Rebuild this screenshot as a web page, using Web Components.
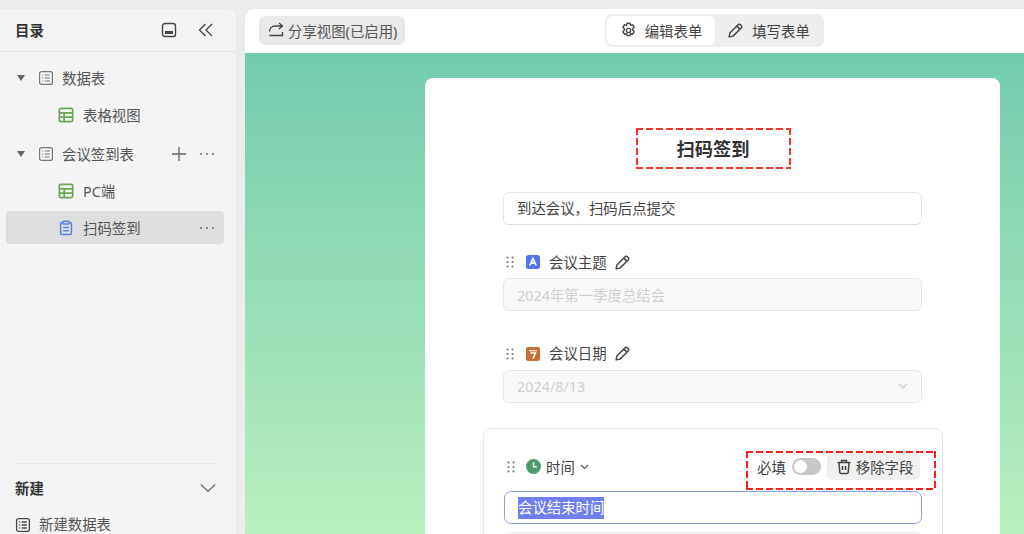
<!DOCTYPE html>
<html lang="zh">
<head>
<meta charset="utf-8">
<title>扫码签到</title>
<style>
html, body { margin: 0; height: 100%; overflow: hidden; background: #ececec; }
body { font-family: "Noto Sans", "Noto Sans CJK SC", sans-serif; font-size: 14.4px; color: #444; }
</style>
</head>
<body>
<app-shell>
    <side-bar slot="side">
        <tree-row icon="list" arrow>数据表</tree-row>
        <tree-row icon="grid" child>表格视图</tree-row>
        <tree-row icon="list" arrow plus more style="margin-top:2px">会议签到表</tree-row>
        <tree-row icon="grid" child>PC端</tree-row>
        <tree-row icon="clip" child more selected>扫码签到</tree-row>
    </side-bar>
    <top-bar slot="top"></top-bar>
    <form-card slot="main">
        <form-field icon="text" label="会议主题" value="2024年第一季度总结会"></form-field>
        <form-field icon="date" label="会议日期" value="2024/8/13" select></form-field>
        <active-field></active-field>
    </form-card>
</app-shell>

<script>
const ICONS = {
    list: `<svg width="16" height="16" viewBox="0 0 16 16" fill="none" stroke="#777" stroke-width="1.2"><rect x="1.6" y="1.6" width="12.8" height="12.8" rx="2"/><path d="M4.2 5h1M4.2 8h1M4.2 11h1M6.8 5h5M6.8 8h5M6.8 11h5"/></svg>`,
    listDark: `<svg width="16" height="16" viewBox="0 0 16 16" fill="none" stroke="#444" stroke-width="1.3"><rect x="1.6" y="1.6" width="12.8" height="12.8" rx="2"/><path d="M4.2 5h1M4.2 8h1M4.2 11h1M6.8 5h5M6.8 8h5M6.8 11h5"/></svg>`,
    grid: `<svg width="16" height="16" viewBox="0 0 16 16" fill="none" stroke="#6aa84f" stroke-width="1.7"><rect x="1.3" y="1.3" width="13.4" height="13.4" rx="1.6"/><path d="M1.3 5.8h13.400M1.3 10.200h13.400M6.200 5.800v8.900"/></svg>`,
    clip: `<svg width="16" height="16" viewBox="0 0 16 16" fill="none" stroke="#5b7ee5" stroke-width="1.5"><path d="M5 2.600H3.800a1.200 1.200 0 0 0-1.200 1.200v9.400a1.400 1.400 0 0 0 1.400 1.400h8a1.400 1.400 0 0 0 1.400-1.400V3.800a1.200 1.200 0 0 0-1.200-1.200H11"/><rect x="5" y="1.200" width="6" height="2.800" rx=".8"/><path d="M5.200 7.500h5.600M5.200 10.700h5.600"/></svg>`,
    pencil: `<svg width="17" height="17" viewBox="0 0 16 16" fill="none" stroke="#444" stroke-width="1.400" stroke-linejoin="round"><path d="M2 14l.7-3.600 7.700-7.800a1.600 1.600 0 0 1 2.300 0l.7.700a1.600 1.600 0 0 1 0 2.300l-7.800 7.700z"/><path d="M9.200 3.900l2.900 2.900"/></svg>`,
    grip: `<svg width="10" height="14" viewBox="0 0 10 14" fill="#777"><circle cx="2.500" cy="2.500" r="1.100"/><circle cx="7.500" cy="2.500" r="1.100"/><circle cx="2.500" cy="7" r="1.100"/><circle cx="7.500" cy="7" r="1.100"/><circle cx="2.500" cy="11.500" r="1.100"/><circle cx="7.500" cy="11.500" r="1.100"/></svg>`,
    dots: `<svg width="16" height="4" viewBox="0 0 16 4" fill="#777"><circle cx="2" cy="2" r="1.100"/><circle cx="8" cy="2" r="1.100"/><circle cx="14" cy="2" r="1.100"/></svg>`,
    plus: `<svg width="16" height="16" viewBox="0 0 16 16" fill="none" stroke="#666" stroke-width="1.300"><path d="M8 1v14M1 8h14"/></svg>`
};

// long red dashes, a plain dashed border comes out too short
function dashedBox(color) {
    const h = `repeating-linear-gradient(90deg, ${color} 0 7px, transparent 7px 10px)`;
    const v = `repeating-linear-gradient(180deg, ${color} 0 7px, transparent 7px 10px)`;
    return `border: 2px solid transparent; background: ${h} top / 100% 2px no-repeat border-box, ${h} bottom / 100% 2px no-repeat border-box, ${v} left / 2px 100% no-repeat border-box, ${v} right / 2px 100% no-repeat border-box;`;
}

class AppShell extends HTMLElement {
    constructor() {
        super();
        this.attachShadow({ mode: "open" });
        this.shadowRoot.innerHTML = `
            <style>
                :host { display: grid; grid-template-columns: 236px 1fr; column-gap: 9px; height: 534px; padding-top: 9px; box-sizing: border-box; overflow: hidden; }
                .main { display: flex; flex-direction: column; min-width: 0; height: 525px; border-radius: 10px 0 0 0; overflow: hidden; }
            </style>
            <slot name="side"></slot>
            <div class="main">
                <slot name="top"></slot>
                <slot name="main"></slot>
            </div>
        `;
    }
}

class SideBar extends HTMLElement {
    constructor() {
        super();
        this.attachShadow({ mode: "open" });
        this.shadowRoot.innerHTML = `
            <style>
                :host { display: flex; flex-direction: column; height: 525px; background: #f4f4f4; border-radius: 0 10px 0 0; overflow: hidden; }
                .head { display: flex; align-items: center; height: 42px; flex: none; padding: 0 22px 0 15px; border-bottom: 1px solid #e6e6e6; }
                h2 { margin: 0 0 2px; flex: 1; font-size: 14.4px; font-weight: 700; color: #333; }
                .head svg + svg { margin-left: 21px; }
                .tree { display: flex; flex-direction: column; padding: 7px 12px 0 6px; }
                .foot { margin-top: auto; flex: none; height: 71px; box-sizing: border-box; margin-left: 15px; margin-right: 20px; border-top: 1px solid #e8e8e8; }
                .new { display: flex; align-items: center; justify-content: space-between; height: 47px; font-weight: 700; color: #333; }
                .item { display: flex; align-items: center; gap: 8px; height: 18px; margin-top: 5px; line-height: 18px; color: #555; }
            </style>
            <div class="head">
                <h2>目录</h2>
                <svg width="16" height="16" viewBox="0 0 16 16" fill="none" stroke="#444" stroke-width="1.400"><rect x="1.500" y="1.500" width="13" height="13" rx="2.500"/><rect x="4" y="9" width="8" height="3" fill="#444" stroke="none"/></svg>
                <svg width="16" height="16" viewBox="0 0 16 16" fill="none" stroke="#444" stroke-width="1.300"><path d="M7.500 2L1.500 8l6 6M14 2L8 8l6 6"/></svg>
            </div>
            <div class="tree"><slot></slot></div>
            <div class="foot">
                <div class="new">新建
                    <svg width="16" height="10" viewBox="0 0 16 10" fill="none" stroke="#666" stroke-width="1.200"><path d="M1 1.500l7 7 7-7"/></svg>
                </div>
                <div class="item">${ICONS.listDark}<span>新建数据表</span></div>
            </div>
        `;
    }
}

class TreeRow extends HTMLElement {
    constructor() {
        super();
        this.attachShadow({ mode: "open" });
        const arrow = this.hasAttribute("arrow");
        this.shadowRoot.innerHTML = `
            <style>
                :host { display: flex; align-items: center; height: 37px; border-radius: 4px; color: #555; flex: none; padding-left: ${this.hasAttribute("child") ? "52px" : "11px"}; }
                :host([selected]) { background: #dedede; height: 33px; margin: 2px 0; }
                :host([child]) .label { margin-left: 9px; }
                .arrow { width: 0; height: 0; border: 4px solid transparent; border-top: 6px solid #666; border-bottom: 0; margin-right: 13px; }
                .label { margin-left: 8px; flex: 1; }
                .tools { display: flex; align-items: center; gap: 12px; padding-right: 9px; }
            </style>
            ${arrow ? `<span class="arrow"></span>` : ""}
            ${ICONS[this.getAttribute("icon")]}
            <span class="label"><slot></slot></span>
            <span class="tools">
                ${this.hasAttribute("plus") ? ICONS.plus : ""}
                ${this.hasAttribute("more") ? ICONS.dots : ""}
            </span>
        `;
    }
}

class TopBar extends HTMLElement {
    constructor() {
        super();
        this.attachShadow({ mode: "open" });
        this.shadowRoot.innerHTML = `
            <style>
                :host { display: grid; grid-template-columns: 1fr auto; align-items: center; height: 44px; flex: none; background: #fff; padding: 0 200px 2px 14px; box-sizing: border-box; }
                .share { justify-self: start; display: flex; align-items: center; gap: 4px; height: 29px; padding: 0 8px 0 9px; background: #e9e9e9; border-radius: 6px; color: #555; white-space: nowrap; }
                .seg { display: flex; padding: 2px; background: #eee; border-radius: 7px; }
                .tab { display: flex; align-items: center; gap: 8px; height: 29px; width: 107px; box-sizing: border-box; justify-content: center; border-radius: 6px; white-space: nowrap; }
                .tab.on { background: #fff; width: 108px; }
            </style>
            <div class="share">
                <svg width="16" height="16" viewBox="0 0 16 16" fill="none" stroke="#444" stroke-width="1.300"><path d="M1.500 9.500a5.500 5.500 0 0 1 5.500-5.500h7M11 1l3.500 3L11 7M1.500 13.500h13V10"/></svg>
                <span>分享视图(已启用)</span>
            </div>
            <div class="seg">
                <div class="tab on">
                    <svg width="17" height="17" viewBox="0 0 16 16" fill="none" stroke="#444" stroke-width="1.300" stroke-linejoin="round"><path d="M6.600 1.200h2.800l.5 1.900 1.900-.6 1.500 2.500-1.400 1.400v1.200l1.400 1.400-1.500 2.500-1.900-.6-.5 1.900H6.600l-.5-1.900-1.900.6-1.500-2.500 1.400-1.400V6.400L2.700 5l1.500-2.500 1.900.6z"/><circle cx="8" cy="8" r="2"/></svg>
                    <span>编辑表单</span>
                </div>
                <div class="tab">${ICONS.pencil}<span>填写表单</span></div>
            </div>
        `;
    }
}

class FormCard extends HTMLElement {
    constructor() {
        super();
        this.attachShadow({ mode: "open" });
        this.shadowRoot.innerHTML = `
            <style>
                :host { display: flex; justify-content: flex-end; flex: 1; min-height: 0; padding: 25px 24px 0 0; box-sizing: border-box; overflow: hidden; background: linear-gradient(#72cbae, #b9f0c0); }
                .card { width: 575px; height: 600px; flex: none; background: #fff; border-radius: 8px 8px 0 0; padding: 50px 57px 0 58px; box-sizing: border-box; }
                .title { display: block; width: 155px; height: 41px; margin: 0 auto; box-sizing: border-box; ${dashedBox("#f5352b")} color: #333; font-size: 18.3px; font-weight: 700; line-height: 37px; text-align: center; }
                .desc { height: 33px; margin: 23px 21px 0 20px; padding-left: 13px; box-sizing: border-box; border: 1px solid #e6e6e6; border-bottom-color: #ddd; border-radius: 6px; line-height: 31px; color: #444; }
            </style>
            <div class="card">
                <h1 class="title">扫码签到</h1>
                <div class="desc">到达会议，扫码后点提交</div>
                <slot></slot>
            </div>
        `;
    }
}

class FormField extends HTMLElement {
    constructor() {
        super();
        this.attachShadow({ mode: "open" });
        const isText = this.getAttribute("icon") === "text";
        const badge = isText
            ? `<svg width="14" height="14" viewBox="0 0 14 14"><rect width="14" height="14" rx="2.500" fill="#5570f1"/><path d="M3.800 10.500L7 3.500l3.200 7M5 8.200h4" fill="none" stroke="#fff" stroke-width="1.700"/></svg>`
            : `<svg width="14" height="14" viewBox="0 0 14 14"><rect width="14" height="14" rx="2" fill="#c96f36"/><path d="M3 3h8v1.300H3z" fill="#fff" opacity=".8"/><path d="M4.500 6h5L7 11.500" fill="none" stroke="#fff" stroke-width="1.500"/></svg>`;
        this.shadowRoot.innerHTML = `
            <style>
                :host { display: block; margin: 0 21px 0 20px; height: 91.5px; padding-top: 27px; box-sizing: border-box; }
                .head { display: flex; align-items: center; height: 20px; margin-left: 2px; margin-bottom: 6px; color: #444; }
                .head .g { margin-right: 11px; display: flex; }
                .head .b { margin-right: 9px; display: flex; }
                .head .t { padding-bottom: 2px; }
                .head .p { margin-left: 7px; display: flex; }
                .box { display: flex; align-items: center; justify-content: space-between; height: 33px; padding: 0 13px; box-sizing: border-box; background: #f9f9f9; border: 1px solid #e6e6e6; border-radius: 6px; color: #d0d0d0; }
            </style>
            <div class="head">
                <span class="g">${ICONS.grip}</span>
                <span class="b">${badge}</span>
                <span class="t">${this.getAttribute("label")}</span>
                <span class="p">${ICONS.pencil}</span>
            </div>
            <div class="box">
                <span>${this.getAttribute("value")}</span>
                ${this.hasAttribute("select") ? `<svg width="10" height="6" viewBox="0 0 10 6" fill="none" stroke="#ccc" stroke-width="1.200"><path d="M1 1l4 4 4-4"/></svg>` : ""}
            </div>
        `;
    }
}

class ActiveField extends HTMLElement {
    constructor() {
        super();
        this.attachShadow({ mode: "open" });
        this.shadowRoot.innerHTML = `
            <style>
                :host { display: block; margin-top: 20px; width: 460px; height: 200px; box-sizing: border-box; background: #fff; border: 1px solid #e8e8e8; border-radius: 8px; padding: 22px 6px 0 20px; }
                .head { display: flex; align-items: flex-start; justify-content: space-between; height: 39px; }
                .left { display: flex; align-items: center; height: 31px; color: #444; margin-left: 2px; }
                .left .g { display: flex; margin-right: 10px; }
                .left .c { display: flex; margin-right: 5px; }
                .left .d { display: flex; margin-left: 5px; }
                .note { display: flex; align-items: center; width: 190px; height: 39px; box-sizing: border-box; ${dashedBox("#f5201a")} padding: 0 0 8px 9px; color: #444; }
                .toggle { width: 29px; height: 17px; margin-left: 6px; background: #c8c8c8; border-radius: 9px; position: relative; flex: none; }
                .toggle::after { content: ""; position: absolute; left: 2px; top: 2px; width: 13px; height: 13px; border-radius: 50%; background: #fff; }
                .remove { display: flex; align-items: center; gap: 4px; height: 27px; margin-left: 6px; padding: 0 7px 0 9px; background: #efefef; border-radius: 6px; white-space: nowrap; }
                .name { display: flex; align-items: center; height: 33px; width: 418px; margin-top: 1px; box-sizing: border-box; border: 1px solid #8ba3e4; border-radius: 7px; padding-left: 13px; color: #333; }
                .name span { background: #6e7fef; color: #fff; line-height: 22px; display: block; }
                .next { height: 33px; width: 418px; margin-top: 8px; box-sizing: border-box; border: 1px solid #e6e6e6; border-radius: 7px; }
            </style>
            <div class="head">
                <div class="left">
                    <span class="g">${ICONS.grip}</span>
                    <span class="c"><svg width="15" height="15" viewBox="0 0 15 15"><circle cx="7.500" cy="7.500" r="7.500" fill="#4f9a6c"/><path d="M7.500 3.500v4.300h3.300" fill="none" stroke="#fff" stroke-width="1.400"/></svg></span>
                    <span>时间</span>
                    <span class="d"><svg width="9" height="6" viewBox="0 0 9 6" fill="none" stroke="#555" stroke-width="1.200"><path d="M1 1l3.500 3.500L8 1"/></svg></span>
                </div>
                <div class="note">
                    <span>必填</span>
                    <span class="toggle"></span>
                    <div class="remove">
                        <svg width="16" height="16" viewBox="0 0 16 16" fill="none" stroke="#444" stroke-width="1.500"><path d="M1.500 3.500h13M5.500 3.500V1.500h5v2M3 3.500l.8 10a1.200 1.200 0 0 0 1.200 1h6a1.200 1.200 0 0 0 1.200-1l.8-10M6.500 7v4M9.500 7v4"/></svg>
                        <span>移除字段</span>
                    </div>
                </div>
            </div>
            <div class="name"><span>会议结束时间</span></div>
            <div class="next"></div>
        `;
    }
}

customElements.define("app-shell", AppShell);
customElements.define("side-bar", SideBar);
customElements.define("tree-row", TreeRow);
customElements.define("top-bar", TopBar);
customElements.define("form-card", FormCard);
customElements.define("form-field", FormField);
customElements.define("active-field", ActiveField);
</script>
</body>
</html>
